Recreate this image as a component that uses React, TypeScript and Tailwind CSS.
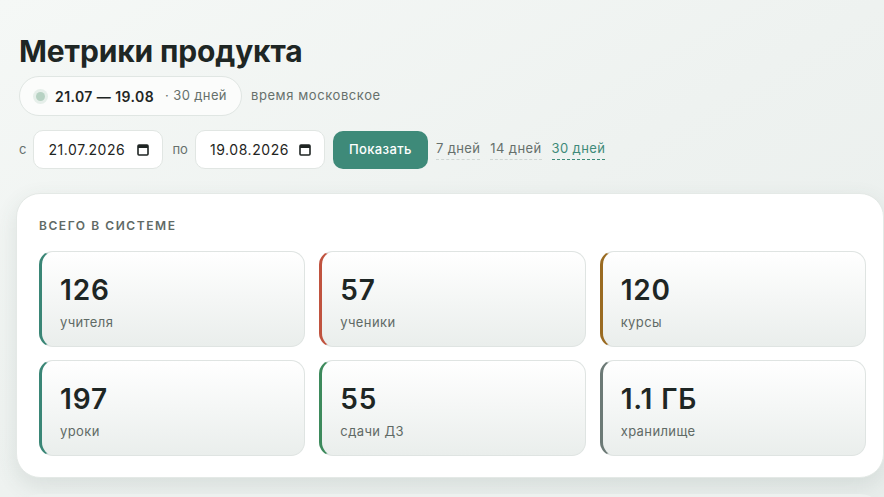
import React from "react";

const stats = [
  { value: "126", label: "учителя", bar: "border-l-[#3a8676]" },
  { value: "57", label: "ученики", bar: "border-l-[#c0533f]" },
  { value: "120", label: "курсы", bar: "border-l-[#9a6b22]" },
  { value: "197", label: "уроки", bar: "border-l-[#3a8676]" },
  { value: "55", label: "сдачи ДЗ", bar: "border-l-[#3d8a5c]" },
  { value: "1.1 ГБ", label: "хранилище", bar: "border-l-[#6c7a76]" },
];

function CalendarIcon() {
  return (
    <svg width="12" height="13" viewBox="0 0 12 13" fill="none">
      <rect x="1" y="2" width="10" height="10" rx="1" stroke="#1f2523" strokeWidth="1.6" />
      <rect x="1" y="2" width="10" height="3" fill="#1f2523" />
    </svg>
  );
}

function DateField({ value }: { value: string }) {
  return (
    <div className="flex h-[39px] w-[130px] items-center justify-between rounded-[10px] border border-[#e1e6e3] bg-white pl-[14px] pr-[13px] text-[14px] tracking-[0.04em] text-[#1f2523]">
      <span>{value}</span>
      <CalendarIcon />
    </div>
  );
}

export default function App() {
  return (
    <div
      className="h-[497px] w-[884px] overflow-hidden bg-gradient-to-br from-[#f5f8f6] via-[#eef2f0] to-[#e9eeec] text-[#1f2523]"
      style={{ fontFamily: "Inter, 'Noto Sans', sans-serif" }}
    >
      <div className="pl-[19px] pt-[32px]">
        <h1 className="text-[30px] font-bold leading-[38px] tracking-[-0.005em] text-[#1e2624]">
          Метрики продукта
        </h1>

        <div className="mt-[6px] flex items-center gap-[9px]">
          <div className="flex h-[40px] items-center rounded-full border border-[#e0e6e3] bg-[#fbfcfb] pl-[16px] pr-[14px]">
            <span className="mr-[10px] h-[9px] w-[9px] rounded-full bg-[#b7d2c3] ring-[3px] ring-[#e6efea]" />
            <span className="text-[14px] font-semibold tracking-[0.03em] text-[#1e2624]">21.07 — 19.08</span>
            <span className="ml-[11px] text-[13px] tracking-[0.03em] text-[#66706c]">· 30 дней</span>
          </div>
          <span className="text-[13px] tracking-[0.045em] text-[#66706c]">время московское</span>
        </div>

        <div className="mt-[14px] flex items-center">
          <span className="mr-[7px] text-[13px] text-[#66706c]">с</span>
          <DateField value="21.07.2026" />
          <span className="ml-[9px] mr-[7px] text-[13px] text-[#66706c]">по</span>
          <DateField value="19.08.2026" />
          <button className="ml-[8px] h-[38px] w-[95px] rounded-[10px] bg-[#3e8a79] text-[13px] font-medium tracking-[0.03em] text-white">
            Показать
          </button>
          <div className="ml-[8px] flex items-center gap-[10px] text-[13px] tracking-[0.03em]">
            <span className="border-b border-dashed border-[#cfd6d3] pb-[1px] text-[#66706c]">7 дней</span>
            <span className="border-b border-dashed border-[#cfd6d3] pb-[1px] text-[#66706c]">14 дней</span>
            <span className="border-b border-dashed border-[#3e8a79] pb-[1px] text-[#3e8a79]">30 дней</span>
          </div>
        </div>
      </div>

      <section className="ml-[16px] mt-[24px] w-[868px] rounded-[24px] border border-[#e4e9e6] bg-white pb-[21px] pl-[22px] pr-[17px] pt-[24px] shadow-[0_8px_22px_rgba(60,80,70,0.12)]">
        <div className="text-[12px] font-semibold uppercase leading-[16px] tracking-[0.13em] text-[#5f6a66]">
          Всего в системе
        </div>
        <div className="mt-[17px] grid grid-cols-3 gap-x-[14px] gap-y-[13px]">
          {stats.map((s) => (
            <div
              key={s.label}
              className={`h-[96px] rounded-[14px] border border-l-[3px] border-[#dfe4e2] ${s.bar} bg-gradient-to-b from-white to-[#eaeeec] pl-[18px] pt-[21px]`}
            >
              <div className="text-[28px] font-semibold leading-[34px] tracking-[0.03em] text-[#1e2624]">{s.value}</div>
              <div className="mt-[6px] text-[13px] tracking-[0.03em] text-[#5f6a66]">{s.label}</div>
            </div>
          ))}
        </div>
      </section>

      <div className="ml-[16px] mt-[16px] h-[40px] w-[868px] rounded-t-[24px] bg-[#edf1ef]" />
    </div>
  );
}
